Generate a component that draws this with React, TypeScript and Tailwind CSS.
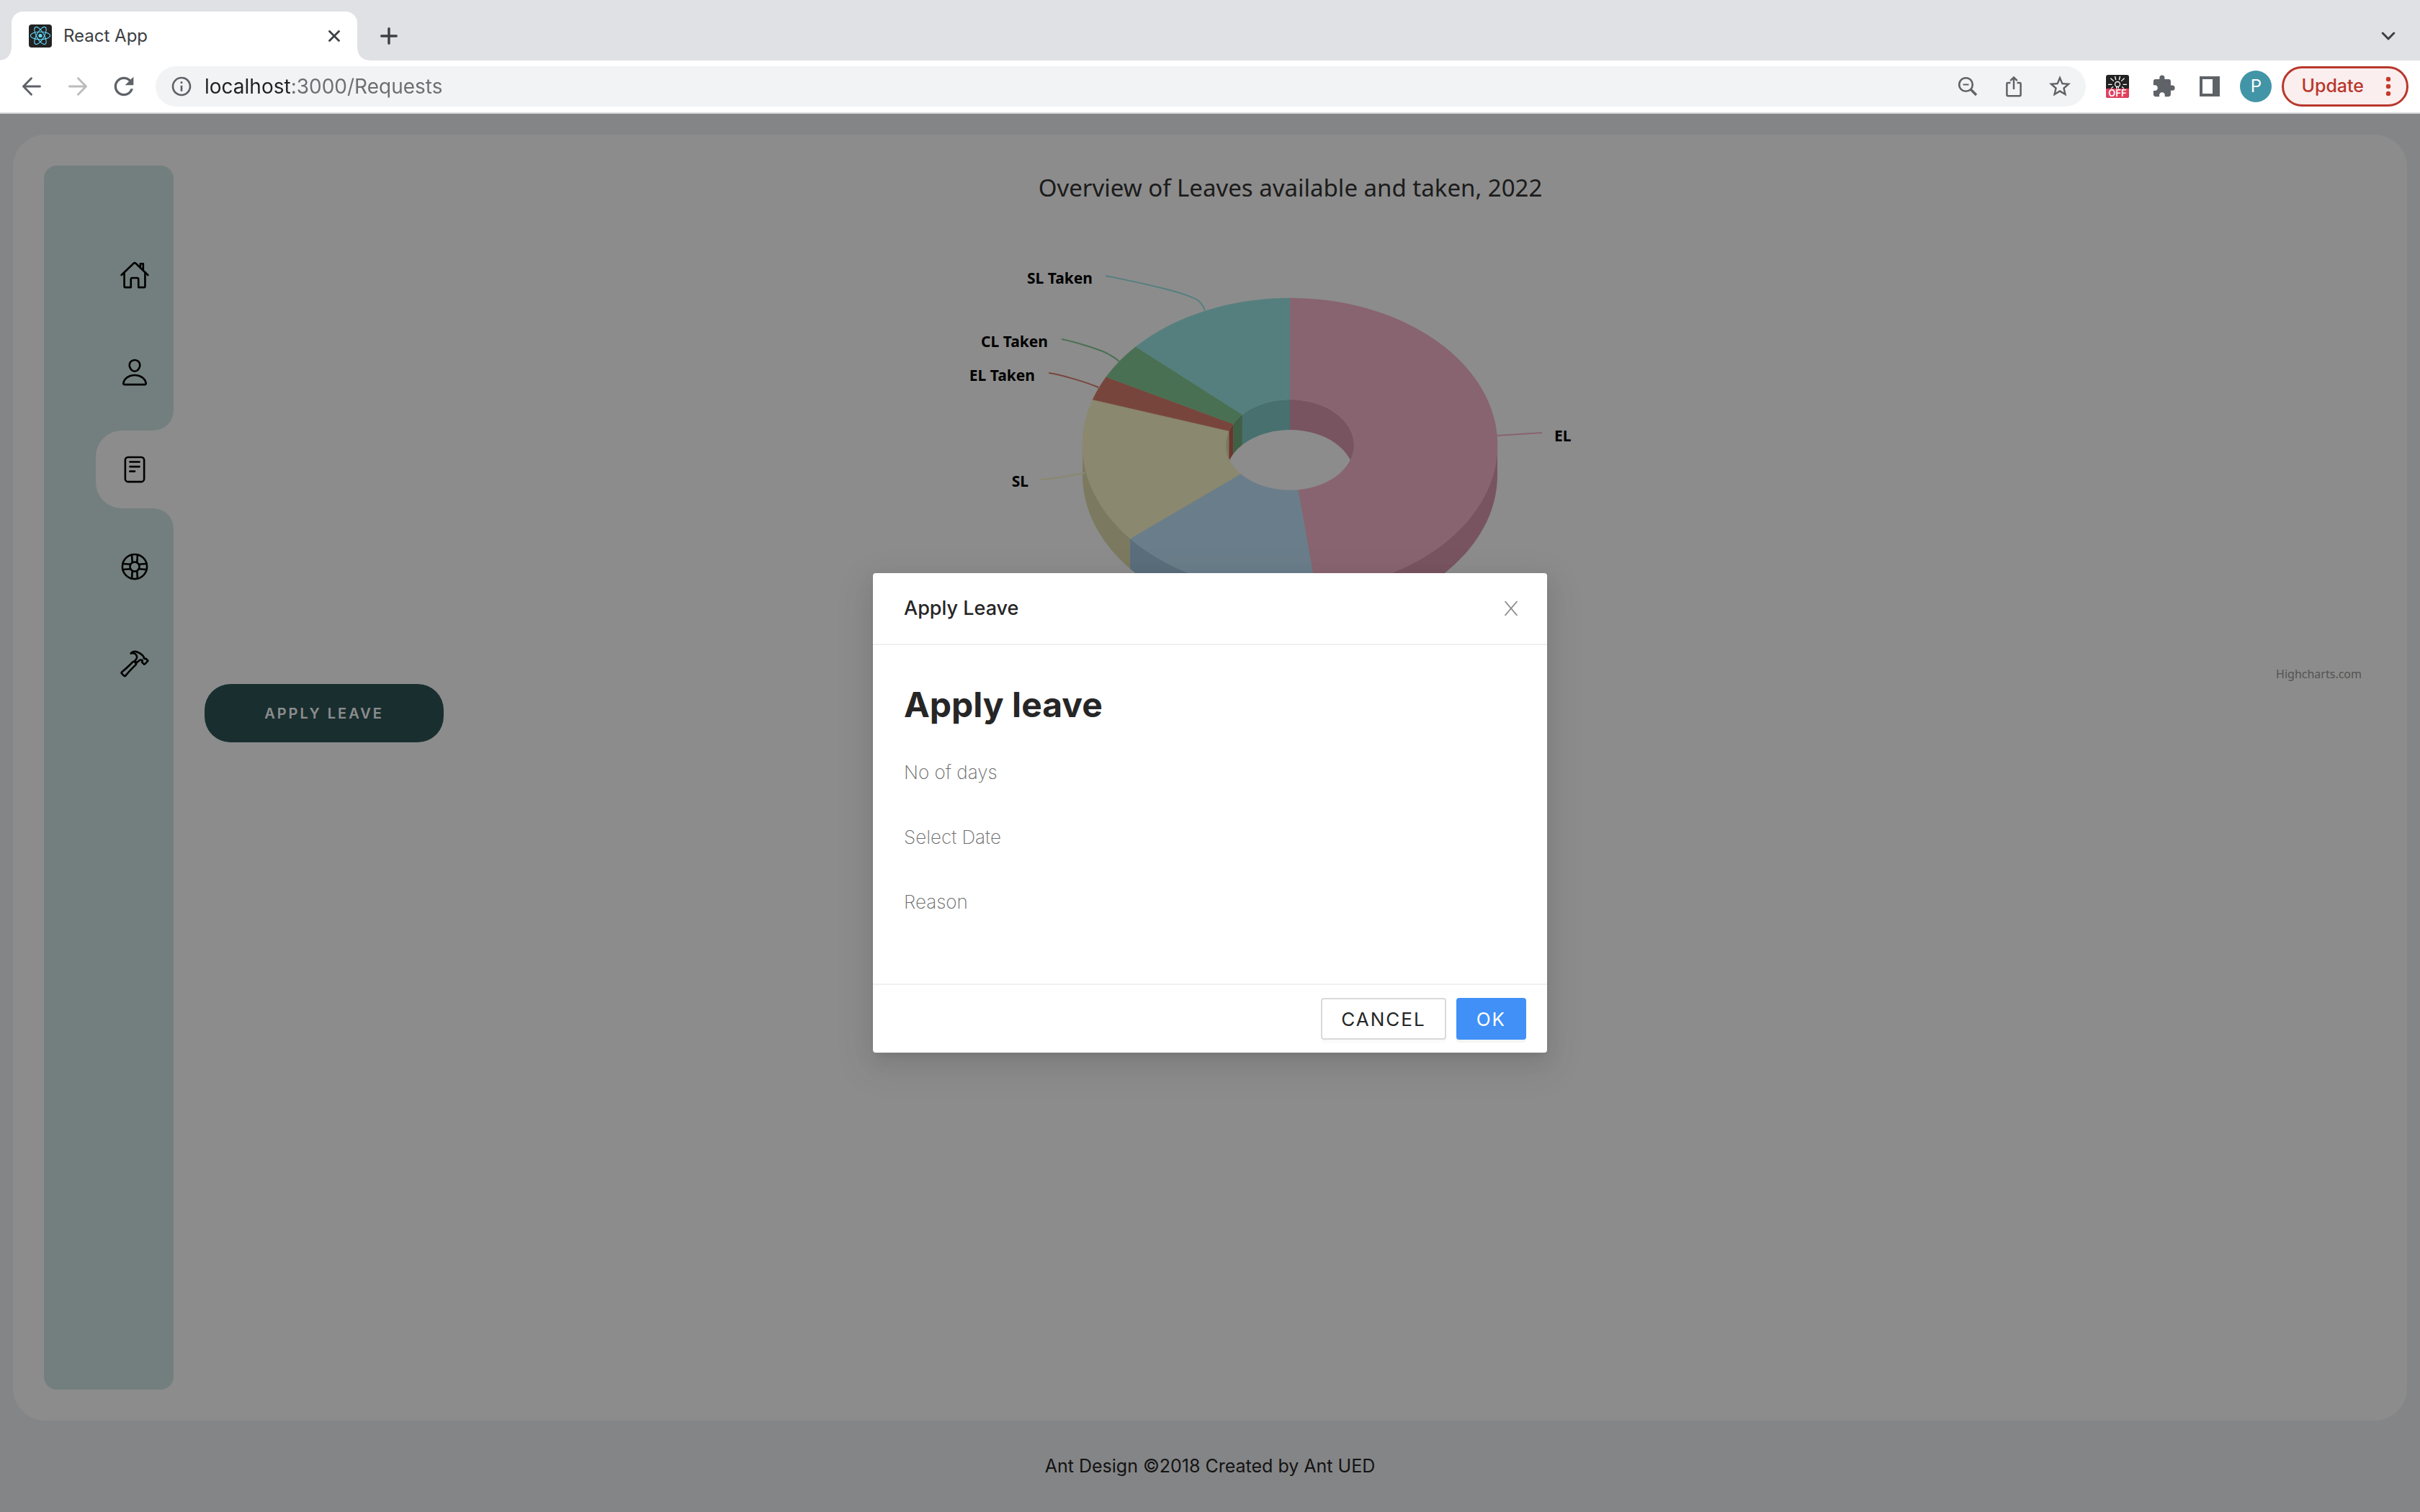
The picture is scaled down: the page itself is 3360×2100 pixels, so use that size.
import type { ReactNode } from 'react';
import {
  IoHammerOutline,
  IoHelpBuoyOutline,
  IoHomeOutline,
  IoPersonOutline,
  IoReaderOutline,
} from 'react-icons/io5';
import { MdExtension, MdInfoOutline, MdRefresh, MdStarBorder } from 'react-icons/md';

type IconButtonProps = { label: string; className?: string; children: ReactNode };

function IconButton({ label, className = '', children }: IconButtonProps) {
  return (
    <button
      type="button"
      aria-label={label}
      className={`flex size-10 shrink-0 items-center justify-center ${className}`}
    >
      {children}
    </button>
  );
}

function ReactFavicon() {
  return (
    <svg viewBox="0 0 32 32" className="size-8 shrink-0" aria-hidden="true">
      <rect width="32" height="32" rx="4" fill="#222" />
      <circle cx="16" cy="15.5" r="2.6" fill="#61dafb" />
      <g fill="none" stroke="#61dafb" strokeWidth="1.1">
        <ellipse cx="16" cy="15.5" rx="13.6" ry="5.2" />
        <ellipse cx="16" cy="15.5" rx="13.6" ry="5.2" transform="rotate(60 16 15.5)" />
        <ellipse cx="16" cy="15.5" rx="13.6" ry="5.2" transform="rotate(120 16 15.5)" />
      </g>
    </svg>
  );
}

function LampExtensionIcon() {
  return (
    <svg viewBox="0 0 32 32" className="size-8" aria-hidden="true">
      <rect width="32" height="32" rx="3" fill="#222" />
      <g fill="none" stroke="#fff" strokeWidth="1.3" strokeLinecap="round">
        <circle cx="16" cy="13" r="3.5" />
        <path d="M3.500 13.300H8M24 13.300h4.500M6.800 5l3.600 3.400M25.200 5l-3.600 3.400M12.600 2.500l1 4M19.400 2.500l-1 4M7.500 18.500l2.200-1.700M24.500 18.500l-2.200-1.700M14.700 16.500v2.500M17.300 16.500v2.500" />
      </g>
      <path d="M0 19h32v10a3 3 0 0 1-3 3H3a3 3 0 0 1-3-3z" fill="#e0405e" />
      <text
        x="16"
        y="30"
        textAnchor="middle"
        fontSize="13"
        fontWeight="600"
        fill="#fff"
        fontFamily="Inter, sans-serif"
      >
        OFF
      </text>
    </svg>
  );
}

function TabStrip() {
  return (
    <div className="flex h-[84px] items-stretch bg-[#dfe1e5] px-4 pt-4 text-[#3c4043]">
      <div className="relative flex w-[480px] items-center gap-4 rounded-t-2xl bg-white pr-3 pl-6">
        <span className="absolute bottom-0 -left-4 size-4 bg-[radial-gradient(circle_at_0_0,#dfe1e5_15px,#fff_16px)]" />
        <span className="absolute -right-4 bottom-0 size-4 bg-[radial-gradient(circle_at_100%_0,#dfe1e5_15px,#fff_16px)]" />
        <ReactFavicon />
        <span className="flex-1 text-[24px]">React App</span>
        <IconButton label="Close tab">
          <svg viewBox="0 0 16 16" className="size-4" stroke="currentColor" strokeWidth="2.8" strokeLinecap="round">
            <path d="M1.5 1.5l13 13M14.5 1.5l-13 13" />
          </svg>
        </IconButton>
      </div>
      <div className="flex flex-1 items-center justify-between pr-2 pl-6">
        <IconButton label="New tab">
          <svg viewBox="0 0 24 24" className="size-6" stroke="currentColor" strokeWidth="3.4" strokeLinecap="round">
            <path d="M12 1.7v20.6M1.7 12h20.6" />
          </svg>
        </IconButton>
        <IconButton label="Search tabs">
          <svg viewBox="0 0 20 12" className="h-3 w-5" fill="none" stroke="currentColor" strokeWidth="3" strokeLinecap="round" strokeLinejoin="round">
            <path d="M2.2 2l7.8 8 7.8-8" />
          </svg>
        </IconButton>
      </div>
    </div>
  );
}

function ArrowIcon({ flipped = false }: { flipped?: boolean }) {
  return (
    <svg
      viewBox="0 0 28 28"
      className={flipped ? 'size-7 -scale-x-100' : 'size-7'}
      fill="none"
      stroke="currentColor"
      strokeWidth="2.9"
      strokeLinecap="round"
      strokeLinejoin="round"
    >
      <path d="M13.5 2.8L2.5 14l11 11.2M2.5 14h23" />
    </svg>
  );
}

function Toolbar() {
  return (
    <div className="flex h-[74px] items-center border-b-2 border-[#d9dadb] bg-white pr-4 pl-6 text-[#5f6368]">
      <div className="flex items-center gap-6">
        <IconButton label="Back">
          <ArrowIcon />
        </IconButton>
        <IconButton label="Forward" className="text-[#babcbe]">
          <ArrowIcon flipped />
        </IconButton>
        <IconButton label="Reload">
          <MdRefresh className="size-10" />
        </IconButton>
      </div>
      <div className="mx-6 flex h-14 flex-1 items-center gap-4 rounded-full bg-[#f1f3f4] pr-4 pl-5">
        <MdInfoOutline className="size-8" />
        <input
          type="text"
          aria-label="Address"
          defaultValue="localhost:3000/Requests"
          className="min-w-0 flex-1 bg-[linear-gradient(to_right,#202124_120px,#6b6e72_120px)] bg-clip-text text-[28px] text-transparent outline-none"
        />
        <div className="flex items-center gap-6">
          <IconButton label="Zoom">
            <svg viewBox="0 0 28 28" className="size-7" fill="none" stroke="currentColor" strokeWidth="2.6">
              <circle cx="11.5" cy="11.5" r="9.3" />
              <path d="M7.5 11.5h8" strokeWidth="2" />
              <path d="M18 18l8 8" strokeWidth="3.4" />
            </svg>
          </IconButton>
          <IconButton label="Share">
            <svg viewBox="0 0 24 30" className="h-[30px] w-6" fill="none" stroke="currentColor" strokeWidth="2.5" strokeLinejoin="round">
              <path d="M7.5 10H4a1.6 1.6 0 0 0-1.6 1.6v15A1.6 1.6 0 0 0 4 28.200h16a1.6 1.6 0 0 0 1.600-1.6v-15A1.6 1.600 0 0 0 20 10h-3.500" />
              <path d="M12 19V2.500M7.200 7.200L12 2.400l4.800 4.800" strokeLinejoin="miter" />
            </svg>
          </IconButton>
          <IconButton label="Bookmark">
            <MdStarBorder className="size-9" />
          </IconButton>
        </div>
      </div>
      <div className="flex items-center gap-6">
        <IconButton label="Dark mode extension">
          <LampExtensionIcon />
        </IconButton>
        <IconButton label="Extensions">
          <MdExtension className="size-[34px]" />
        </IconButton>
        <IconButton label="Side panel">
          <svg viewBox="0 0 28 28" className="size-7" fill="currentColor">
            <path fillRule="evenodd" d="M0 0h28v28H0zM4 4v20h14V4z" />
          </svg>
        </IconButton>
      </div>
      <button
        type="button"
        aria-label="Profile"
        className="mr-3.5 ml-[22px] flex size-11 items-center justify-center rounded-full bg-[#4195a6] text-[24px] text-white"
      >
        P
      </button>
      <button
        type="button"
        className="flex h-14 items-center gap-[30px] rounded-full border-[3px] border-[#b8372b] bg-[#faeeee] pr-[21px] pl-6 text-[25px] font-medium text-[#b8372b]"
      >
        Update
        <svg viewBox="0 0 8 28" className="h-7 w-2" fill="#c53929" aria-hidden="true">
          <circle cx="4" cy="4" r="3.200" />
          <circle cx="4" cy="14" r="3.200" />
          <circle cx="4" cy="24" r="3.200" />
        </svg>
      </button>
    </div>
  );
}

const navItems = [
  { label: 'Home', Icon: IoHomeOutline },
  { label: 'Profile', Icon: IoPersonOutline },
  { label: 'Requests', Icon: IoReaderOutline, active: true },
  { label: 'Help', Icon: IoHelpBuoyOutline },
  { label: 'Tools', Icon: IoHammerOutline },
];

function Sidebar() {
  return (
    <nav className="flex w-[180px] shrink-0 flex-col items-end gap-[27px] rounded-[18px] bg-[#d1e7e5] pt-[98px]">
      {navItems.map(({ label, Icon, active }) => (
        <a
          key={label}
          href={`#${label}`}
          aria-label={label}
          aria-current={active ? 'page' : undefined}
          className={
            active
              ? 'relative flex size-[108px] items-center justify-center rounded-l-[36px] bg-white'
              : 'flex size-[108px] items-center justify-center'
          }
        >
          {active && (
            <>
              <span className="absolute -top-[27px] right-0 size-[27px] bg-[radial-gradient(circle_at_0_0,#d1e7e5_26px,#fff_27px)]" />
              <span className="absolute right-0 -bottom-[27px] size-[27px] bg-[radial-gradient(circle_at_0_100%,#d1e7e5_26px,#fff_27px)]" />
            </>
          )}
          <Icon className="size-[42px] text-black" />
        </a>
      ))}
    </nav>
  );
}

const CX = 507;
const CY = 388;
const RX = 288;
const RY = 204;
const HOLE_RX = 89;
const HOLE_RY = 63;
const DEPTH = 42;

const slices = [
  { name: 'EL', value: 36, top: '#f7b6cc', side: '#da99af' },
  { name: 'CL', value: 12, top: '#c1e3fb', side: '#a5c8e1' },
  { name: 'SL', value: 12, top: '#fbf7c8', side: '#e1dcad' },
  { name: 'EL Taken', value: 2, top: '#da7f6d', side: '#c16450' },
  { name: 'CL Taken', value: 3, top: '#88cd97', side: '#73af7f' },
  { name: 'SL Taken', value: 10, top: '#9be7e5', side: '#81cdca' },
];

const total = slices.reduce((sum, s) => sum + s.value, 0);
let cursor = 0;
const arcs = slices.map((s) => {
  const start = (cursor / total) * 360;
  cursor += s.value;
  return { ...s, start, end: (cursor / total) * 360 };
});

function pt(deg: number, rx: number, ry: number, dy = 0) {
  const a = (deg * Math.PI) / 180;
  return `${(CX + rx * Math.sin(a)).toFixed(1)} ${(CY - ry * Math.cos(a) + dy).toFixed(1)}`;
}

function topPath(a: number, b: number) {
  const large = b - a > 180 ? 1 : 0;
  return `M${pt(a, RX, RY)}A${RX} ${RY} 0 ${large} 1 ${pt(b, RX, RY)}L${pt(b, HOLE_RX, HOLE_RY)}A${HOLE_RX} ${HOLE_RY} 0 ${large} 0 ${pt(a, HOLE_RX, HOLE_RY)}Z`;
}

function wallPath(a: number, b: number, rx: number, ry: number) {
  return `M${pt(a, rx, ry)}A${rx} ${ry} 0 0 1 ${pt(b, rx, ry)}L${pt(b, rx, ry, DEPTH)}A${rx} ${ry} 0 0 0 ${pt(a, rx, ry, DEPTH)}Z`;
}

const connectors = [
  { color: '#9be7e5', d: 'M251 153C275 158 376 177 383 191Q386 194 389 201' },
  { color: '#88cd97', d: 'M190 241C205 244 247 256 257 263Q263 266 270 272' },
  { color: '#da7f6d', d: 'M172 288C188 290 225 301 241 308' },
  { color: '#fbf7c8', d: 'M161 436C176 436 202 430 223 427' },
  { color: '#f7b6cc', d: 'M794 375L857 371' },
];

const chartLabels = [
  { text: 'SL Taken', x: 233, y: 164, end: true },
  { text: 'CL Taken', x: 171, y: 252, end: true },
  { text: 'EL Taken', x: 153, y: 299, end: true },
  { text: 'SL', x: 144, y: 446, end: true },
  { text: 'EL', x: 874, y: 383, end: false },
];

function LeaveChart() {
  return (
    <figure className="relative flex h-[720px] flex-col items-center">
      <figcaption className="pt-3 font-['Noto_Sans',sans-serif] text-[33px] leading-[38px] text-[#333]">
        Overview of Leaves available and taken, 2022
      </figcaption>
      <svg viewBox="0 50 1016 660" className="h-[660px] w-[1016px]" role="img" aria-label="Leaves available and taken">
        <defs>
          <clipPath id="hole">
            <ellipse cx={CX} cy={CY} rx={HOLE_RX} ry={HOLE_RY} />
          </clipPath>
        </defs>
        {arcs
          .filter((s) => s.end > 90 && s.start < 270)
          .map((s) => (
            <path key={s.name} d={wallPath(Math.max(s.start, 90), Math.min(s.end, 270), RX, RY)} fill={s.side} />
          ))}
        {arcs.map((s) => (
          <path key={s.name} d={topPath(s.start, s.end)} fill={s.top} stroke={s.top} strokeWidth="0.5" />
        ))}
        <g clipPath="url(#hole)">
          {arcs
            .filter((s) => s.start < 90 || s.end > 270)
            .map((s) => (
              <path
                key={s.name}
                d={
                  s.start < 90
                    ? wallPath(s.start, Math.min(s.end, 90), HOLE_RX, HOLE_RY)
                    : wallPath(Math.max(s.start, 270), s.end, HOLE_RX, HOLE_RY)
                }
                fill={s.side}
              />
            ))}
        </g>
        {connectors.map((c) => (
          <path key={c.d} d={c.d} fill="none" stroke={c.color} strokeWidth="2" />
        ))}
        {chartLabels.map((l) => (
          <text
            key={l.text}
            x={l.x}
            y={l.y}
            textAnchor={l.end ? 'end' : 'start'}
            className="fill-black font-['Noto_Sans',sans-serif] text-[21px] font-bold"
          >
            {l.text}
          </text>
        ))}
      </svg>
      <a
        href="#highcharts"
        className="absolute right-5 bottom-1 font-['Noto_Sans',sans-serif] text-[16px] leading-5 text-[#999]"
      >
        Highcharts.com
      </a>
    </figure>
  );
}

function Field({ label }: { label: string }) {
  return (
    <label className="flex h-[90px] items-center gap-4 text-[26px] font-extralight text-[#6b6b6b]">
      <span>{label}</span>
      <input type="text" className="min-w-0 flex-1 bg-transparent outline-none" />
    </label>
  );
}

function ApplyLeaveModal() {
  return (
    <div className="absolute inset-0 flex items-center justify-center bg-black/45">
      <div
        role="dialog"
        aria-label="Apply Leave"
        className="w-[936px] rounded-[4px] bg-white text-[#262626] shadow-[0_5px_11px_-7px_rgb(0_0_0/0.12),0_11px_29px_rgb(0_0_0/0.08),0_16px_50px_14px_rgb(0_0_0/0.05)]"
      >
        <header className="flex h-[100px] items-center justify-between border-b-2 border-[#f0f0f0] pr-[30px] pl-[43px]">
          <h2 className="text-[27px] font-medium">Apply Leave</h2>
          <IconButton label="Close" className="text-[#8c8c8c]">
            <svg viewBox="0 0 20 20" className="size-5" stroke="currentColor" strokeWidth="1.8">
              <path d="M1.500 0l17 20M18.500 0l-17 20" />
            </svg>
          </IconButton>
        </header>
        <div className="px-[43px] pt-[43px] pb-[69px]">
          <h1 className="mb-2 text-[48px] leading-[80px] font-bold">Apply leave</h1>
          <Field label="No of days" />
          <Field label="Select Date" />
          <Field label="Reason" />
        </div>
        <footer className="flex justify-end gap-3.5 border-t-2 border-[#f0f0f0] px-[29px] py-[18px] text-[26px] tracking-[2px]">
          <button
            type="button"
            className="h-[58px] rounded-[4px] border-2 border-[#d9d9d9] px-[26px] shadow-[0_4px_0_rgb(0_0_0/0.02)]"
          >
            CANCEL
          </button>
          <button
            type="button"
            className="h-[58px] rounded-[4px] bg-[#4090f7] px-7 text-white shadow-[0_4px_0_rgb(0_0_0/0.04)]"
          >
            OK
          </button>
        </footer>
      </div>
    </div>
  );
}

export default function App() {
  return (
    <div className="flex min-h-screen flex-col font-['Inter',sans-serif]">
      <header>
        <TabStrip />
        <Toolbar />
      </header>
      <div className="relative flex flex-1 flex-col bg-[#f0f2f5]">
        <main className="mx-[18px] mt-[29px] flex flex-1 gap-[43px] rounded-[45px] bg-white p-[43px]">
          <Sidebar />
          <section className="min-w-0 flex-1">
            <LeaveChart />
            <button
              type="button"
              className="h-[81px] w-[332px] rounded-[36px] bg-[#2f5557] text-[20px] font-semibold tracking-[3px] text-white"
            >
              APPLY LEAVE
            </button>
          </section>
        </main>
        <footer className="flex h-[127px] items-center justify-center text-[25px] text-[#262626]">
          Ant Design ©2018 Created by Ant UED
        </footer>
        <ApplyLeaveModal />
      </div>
    </div>
  );
}
